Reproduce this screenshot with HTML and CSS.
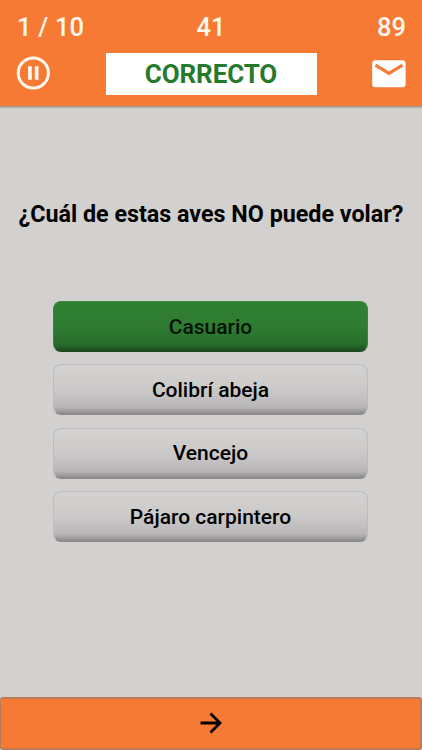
FILE: index.html
```html
<!DOCTYPE html>

<html lang="es">

<head>
    <meta charset="utf-8">
    <title>Quiz</title>

    <link rel="stylesheet" href="styles.css">
</head>

<body>
    <div class="header">
        <div class="row stats">
            <span class="stat left">1 / 10</span>
            <span class="stat">41</span>
            <span class="stat right">89</span>
        </div>
        <div class="row tools">
            <svg class="pause" width="34" height="34" viewBox="0 0 34 34">
                <circle cx="17.3" cy="17" r="15.1" fill="none" stroke="#fff8ee" stroke-width="3" />
                <path d="M12.1 10.3h3.7v13.4h-3.7zM18.8 10.3h3.7v13.4h-3.7z" fill="#fff8ee" />
            </svg>
            <div class="result">CORRECTO</div>
            <svg class="mail" width="34" height="28" viewBox="0 0 34 28">
                <rect x="0.2" y="0.3" width="33.4" height="27" rx="3.2" fill="#fff" />
                <path d="M3.5 5.2L17 13.4L30.5 5.2" fill="none" stroke="#f67934" stroke-width="3.2" />
            </svg>
        </div>
    </div>
    <div class="main">
        <h1 class="question">¿Cuál de estas aves NO puede volar?</h1>
        <div class="answers">
            <button class="answer correct">Casuario</button>
            <button class="answer">Colibrí abeja</button>
            <button class="answer">Vencejo</button>
            <button class="answer">Pájaro carpintero</button>
        </div>
    </div>
    <button class="next">
        <svg width="22" height="22" viewBox="0 0 22 22">
            <path d="M0.5 11h19M10.5 1.5l9.5 9.5l-9.5 9.5" fill="none" stroke="#000" stroke-width="2.8" />
        </svg>
    </button>
</body>

</html>
```

FILE: styles.css
```css
* {
    box-sizing: border-box;
}

body {
    display: flex;
    flex-direction: column;
    height: 750px;
    margin: 0;
    background-color: #d2d1cf;
    font-family: Roboto, "Liberation Sans", sans-serif;
}

button {
    font-family: inherit;
}

.header {
    height: 107px;
    padding: 12px 16px 0;
    border-bottom: 1px solid #a59a94;
    background-color: #f67934;
    box-shadow: 0 1px 1px #b5b2b0;
}

.row {
    display: grid;
    align-items: center;
}

.stats {
    grid-template-columns: 1fr auto 1fr;
    height: 30px;
}

.stat {
    color: #fff8ee;
    font-size: 25.5px;
    font-weight: 500;
    line-height: 30px;
}

.left {
    padding-left: 1px;
    letter-spacing: 0.2px;
}

.right {
    text-align: right;
}

.tools {
    grid-template-columns: 1fr 211px 1fr;
    height: 42px;
    margin-top: 11px;
}

.mail {
    justify-self: end;
}

.pause {
    margin-bottom: 2px;
}

.result {
    height: 42px;
    background-color: #fff;
    color: #267a2c;
    font-size: 26px;
    font-weight: 700;
    line-height: 43px;
    letter-spacing: -0.1px;
    text-align: center;
}

.main {
    flex: 1;
}

.question {
    margin: 92px 0 0;
    font-size: 23.3px;
    font-weight: 700;
    line-height: 30px;
    text-align: center;
    white-space: nowrap;
}

.answers {
    display: grid;
    gap: 12.4px;
    width: 315px;
    margin: 72px 0 0 53px;
}

.answer {
    height: 51px;
    padding: 0;
    border: 1px solid #bdbbbc;
    border-bottom-color: #8b888b;
    border-radius: 8px;
    background: linear-gradient(#d3d2d0, #cdcbca 45%, #b9b6b8 86%, #8b888b);
    color: #000;
    font-size: 21px;
    font-weight: 500;
}

.correct {
    border-color: #3c853e;
    border-bottom-color: #1c491e;
    background: linear-gradient(#2f8033, #2e7c31 50%, #286d2c 86%, #1c491e);
    color: #031303;
}

.next {
    display: flex;
    align-items: center;
    justify-content: center;
    height: 53px;
    padding: 0 0 2px;
    border: 2px solid #b97c57;
    border-left-width: 1px;
    border-radius: 3px;
    background-color: #f67934;
}
```
